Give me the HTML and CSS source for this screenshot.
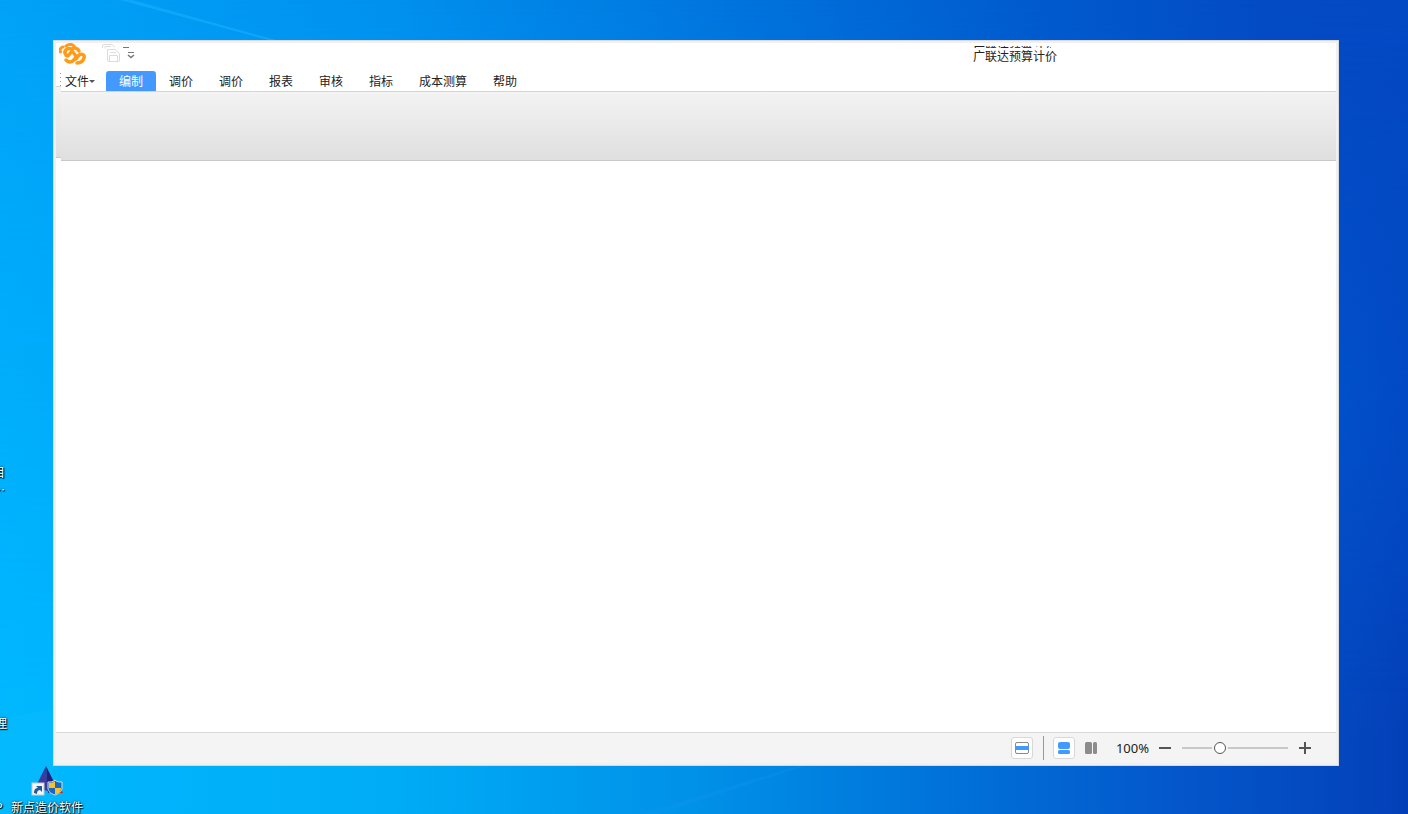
FILE: index.html
```
<!DOCTYPE html>
<html lang="zh-CN">
<head>
  <meta charset="UTF-8" />
  <meta name="viewport" content="width=device-width, initial-scale=1.0"/>
  <title>广联达预算计价</title>
  <link rel="stylesheet" href="styles.css">
</head>
<body>
  <svg class="rays" viewBox="0 0 1408 814" preserveAspectRatio="none" aria-hidden="true">
    <path d="M120 0 L268 40 L276 40 L132 0 Z" fill="#16b0ff" opacity=".6"/>
    <path d="M0 719 L53 709 V814 H0 Z" fill="#10c0ff" opacity=".25"/>
    <path d="M640 814 L798 766 L804 766 L660 814 Z" fill="#1094f4" opacity=".3"/>
  </svg>

  <div class="desktop-label label-top">目<br>…</div>
  <div class="desktop-label label-middle">理</div>
  <div class="desktop-label label-bottom">P</div>
  <a href="#" class="shortcut">
    <svg width="34" height="32" viewBox="0 0 34 32" aria-hidden="true">
      <path d="M16 0 L18 25 L5 22 Z" fill="#3a3d9e"/>
      <path d="M16 0 L27 22 L18 27 Z" fill="#20207a"/>
      <rect x="2" y="17" width="12" height="12" fill="#f5f5f5" stroke="#c8ccd0"/>
      <path d="M4 27 C4 23 6 22 8 22 L6 20 H12 V26 L10 24 C8 24 7 25 7 28 Z" fill="#235a9c"/>
      <path d="M29 20 L33 27 L28 27 Z" fill="#c62820"/>
      <path d="M25 14 C23 16 21 16 18 16 V22 C18 26 22 28 25 29 C28 28 32 26 32 22 V16 C29 16 27 16 25 14 Z" fill="#1769c0" stroke="#d8dde2"/>
      <path d="M25 15 V22 H19 V17 C22 17 24 16 25 15 Z M25 22 H31 C31 26 28 28 25 28 Z" fill="#fbc02d"/>
    </svg>
    <span>新点造价软件</span>
  </a>

  <div class="window">
    <header class="title-bar">
      <svg class="logo" width="28" height="22" viewBox="0 0 28 22" aria-hidden="true">
        <g fill="none" stroke="#ff9b19" stroke-width="3.500" stroke-linecap="round" stroke-linejoin="round">
          <path d="M1.500 9 C0 7 2 4 4 4 M7 3 C10 1 13 1 15 3" stroke-width="3"/>
          <path d="M20 8 C19 5 15 4 13 6 C8 4 4 8 7 12 C7 13 8 13 9 13 L13 8"/>
          <path d="M13 8 L17 13 C17 15 14 19 11 19 C9 19 8 18 7 17"/>
          <path d="M17 16 L20 12 C23 10 26 12 25 15 C24 18 21 20 18 20"/>
        </g>
      </svg>
      <button class="quick-btn" aria-label="保存">
        <svg width="20" height="20" viewBox="0 0 20 20" fill="none" stroke="#dcdcdc">
          <path d="M.5 4 V2 Q.5 .5 2 .5 H10 L13 3 M3 4.500 V2.500 H9"/>
          <path d="M5.500 5.500 H13 L17.500 9.500 V17 Q17.500 17.500 16 17.500 H7 Q5.500 17.500 5.500 16 Z M8 8.500 H14 M7.500 17 V11.500 H15.500 V17"/>
        </svg>
      </button>
      <button class="quick-btn more-btn" aria-label="更多">
        <svg width="14" height="16" viewBox="0 0 14 16" fill="none" stroke="#777">
          <path d="M1 1.500 H7 M6 6.500 H12"/>
          <path d="M6 9 L9 11.500 L12 9" stroke-width="1.500"/>
        </svg>
      </button>
      <div class="app-title">
        <span class="title-echo" aria-hidden="true">广联达预算计价</span>
        <h1>广联达预算计价</h1>
      </div>
    </header>

    <nav class="menu">
      <button class="file-btn">文件<span class="caret"></span></button>
      <button class="tab active">编制</button>
      <button class="tab">调价</button>
      <button class="tab">调价</button>
      <button class="tab">报表</button>
      <button class="tab">审核</button>
      <button class="tab">指标</button>
      <button class="tab">成本测算</button>
      <button class="tab">帮助</button>
    </nav>

    <div class="ribbon"></div>

    <main></main>

    <footer class="status-bar">
      <button class="view-btn framed" aria-label="整页">
        <svg width="14" height="12" viewBox="0 0 14 12">
          <rect x=".5" y=".5" width="13" height="11" rx="1.500" fill="#fff" stroke="#888"/>
          <rect x="0" y="4" width="14" height="4" fill="#4499ff"/>
        </svg>
      </button>
      <span class="divider"></span>
      <button class="view-btn framed" aria-label="上下排列">
        <svg width="12" height="12" viewBox="0 0 12 12" fill="#4499ff">
          <rect width="12" height="7" rx="2"/>
          <rect y="8" width="12" height="4" rx="1.500"/>
        </svg>
      </button>
      <button class="view-btn" aria-label="左右排列">
        <svg width="12" height="12" viewBox="0 0 12 12" fill="#8c8c8c">
          <rect width="7" height="12" rx="1.500"/>
          <rect x="8" width="4" height="12" rx="1.500"/>
        </svg>
      </button>
      <label class="zoom-value" for="zoom">100%</label>
      <button class="zoom-btn" aria-label="缩小">
        <svg width="12" height="12" viewBox="0 0 12 12" fill="#555"><rect y="5" width="12" height="2"/></svg>
      </button>
      <input type="range" id="zoom" min="0" max="100" value="34">
      <button class="zoom-btn" aria-label="放大">
        <svg width="12" height="12" viewBox="0 0 12 12" fill="#555"><path d="M0 5 H5 V0 H7 V5 H12 V7 H7 V12 H5 V7 H0 Z"/></svg>
      </button>
    </footer>
  </div>
</body>
</html>
```
FILE: styles.css
```
* { box-sizing: border-box; margin: 0; padding: 0; }

body {
  position: relative;
  display: flex;
  min-height: 100vh;
  padding: 40px 69px 48px 53px;
  overflow: hidden;
  font-family: "Noto Sans CJK SC", sans-serif;
  font-size: 12px;
  line-height: 18px;
  color: #222;
  background: linear-gradient(90deg, #00b8ff 0%, #00acf6 28%, #0090e8 50%, #0074da 66%, #0456ca 84%, #0340b8 100%);
}

/* upper part of the wallpaper */
body::before {
  content: "";
  position: absolute;
  inset: 0;
  background: linear-gradient(90deg, #00a2f8 0%, #0090ee 28%, #0076de 50%, #005ccf 72%, #034bc4 90%, #0349c4 100%);
  -webkit-mask-image: linear-gradient(#000, transparent 85%);
  mask-image: linear-gradient(#000, transparent 85%);
}

/* lighter patch along the right edge */
body::after {
  content: "";
  position: absolute;
  inset: 0;
  background: radial-gradient(ellipse 200px 340px at 94% 50%, rgba(0, 88, 214, 0.5), transparent);
}

button {
  border: none;
  background: transparent;
  font: inherit;
  color: inherit;
  cursor: pointer;
}

svg {
  display: block;
}

.rays {
  position: absolute;
  inset: 0;
  width: 100%;
  height: 100%;
}

/* Desktop */
.desktop-label, .shortcut {
  position: absolute;
  z-index: 1;
  color: #fff;
  text-shadow: 1px 1px 1px #000, 0 0 2px #000;
  white-space: nowrap;
}

.desktop-label {
  left: -7px;
}

.label-top {
  top: 463px;
}

.label-middle {
  left: -5px;
  top: 714px;
}

.label-bottom {
  left: -5px;
  top: 798px;
}

.shortcut {
  left: 11px;
  top: 766px;
  display: flex;
  flex-direction: column;
  align-items: center;
  text-decoration: none;
}

/* Window */
.window {
  position: relative;
  z-index: 1;
  flex: 1;
  display: flex;
  flex-direction: column;
  background-color: #fff;
  border: 1px solid #d9d9d9;
  box-shadow: inset 0 0 0 2px #f0f0f0;
  padding: 2px;
}

.title-bar {
  display: flex;
  align-items: flex-start;
  height: 28px;
  padding-left: 3px;
}

.quick-btn {
  margin: 1px 0 0 15px;
}

.more-btn {
  margin: 3px 0 0 0;
}

.app-title {
  position: relative;
  margin: 4px 279px 0 auto;
}

.app-title h1 {
  font-size: 12px;
  font-weight: normal;
}

.title-echo {
  position: absolute;
  left: 0;
  top: -1px;
  width: 78px;
  height: 2px;
  line-height: 8px;
  overflow: hidden;
  white-space: nowrap;
}

.menu {
  position: relative;
  display: flex;
  height: 20px;
  padding-left: 9px;
}

/* grip dots */
.menu::before {
  content: "";
  position: absolute;
  left: 4px;
  top: 2px;
  width: 1px;
  height: 13px;
  background: repeating-linear-gradient(#999 0 1px, transparent 1px 4px);
}

.file-btn {
  display: flex;
  align-items: center;
  width: 41px;
}

.caret {
  border: 3px solid transparent;
  border-top-color: #555;
  border-bottom: none;
}

.tab {
  padding: 0 13px;
  border-radius: 3px 3px 0 0;
}

.tab.active {
  background-color: #4499ff;
  color: #fff;
}

.ribbon {
  position: relative;
  height: 70px;
  margin-left: 5px;
}

.ribbon, .ribbon::before {
  border-top: 1px solid #d5d5d5;
  border-bottom: 1px solid #c8c8c8;
  background: linear-gradient(#f3f3f3, #dfdfdf);
}

.ribbon::before {
  content: "";
  position: absolute;
  left: -5px;
  top: -6px;
  width: 5px;
  height: 70px;
}

main {
  flex: 1;
}

/* Status bar */
.status-bar {
  display: flex;
  align-items: center;
  justify-content: flex-end;
  height: 31px;
  padding-right: 25px;
  background-color: #f4f4f4;
  border-top: 1px solid #d8d8d8;
}

.view-btn {
  display: flex;
  align-items: center;
  justify-content: center;
  width: 22px;
  height: 22px;
  border-radius: 3px;
}

.view-btn.framed {
  background-color: #fff;
  border: 1px solid #d8d8d8;
}

.divider {
  width: 1px;
  height: 24px;
  margin: 0 9px 0 10px;
  background-color: #999;
}

.view-btn.framed + .view-btn {
  margin-left: 5px;
}

.zoom-value {
  margin: 0 10px 0 14px;
  font-family: "Noto Sans", sans-serif;
  font-size: 13px;
}

#zoom {
  appearance: none;
  width: 106px;
  height: 16px;
  margin: 0 11px;
  background: transparent;
}

#zoom::-webkit-slider-runnable-track {
  height: 2px;
  background-color: #c8c8c8;
}

#zoom::-webkit-slider-thumb {
  appearance: none;
  width: 12px;
  height: 12px;
  margin-top: -5px;
  border: 1px solid #555;
  border-radius: 50%;
  background-color: #fff;
  box-shadow: 0 0 0 2px #f4f4f4;
}
```
